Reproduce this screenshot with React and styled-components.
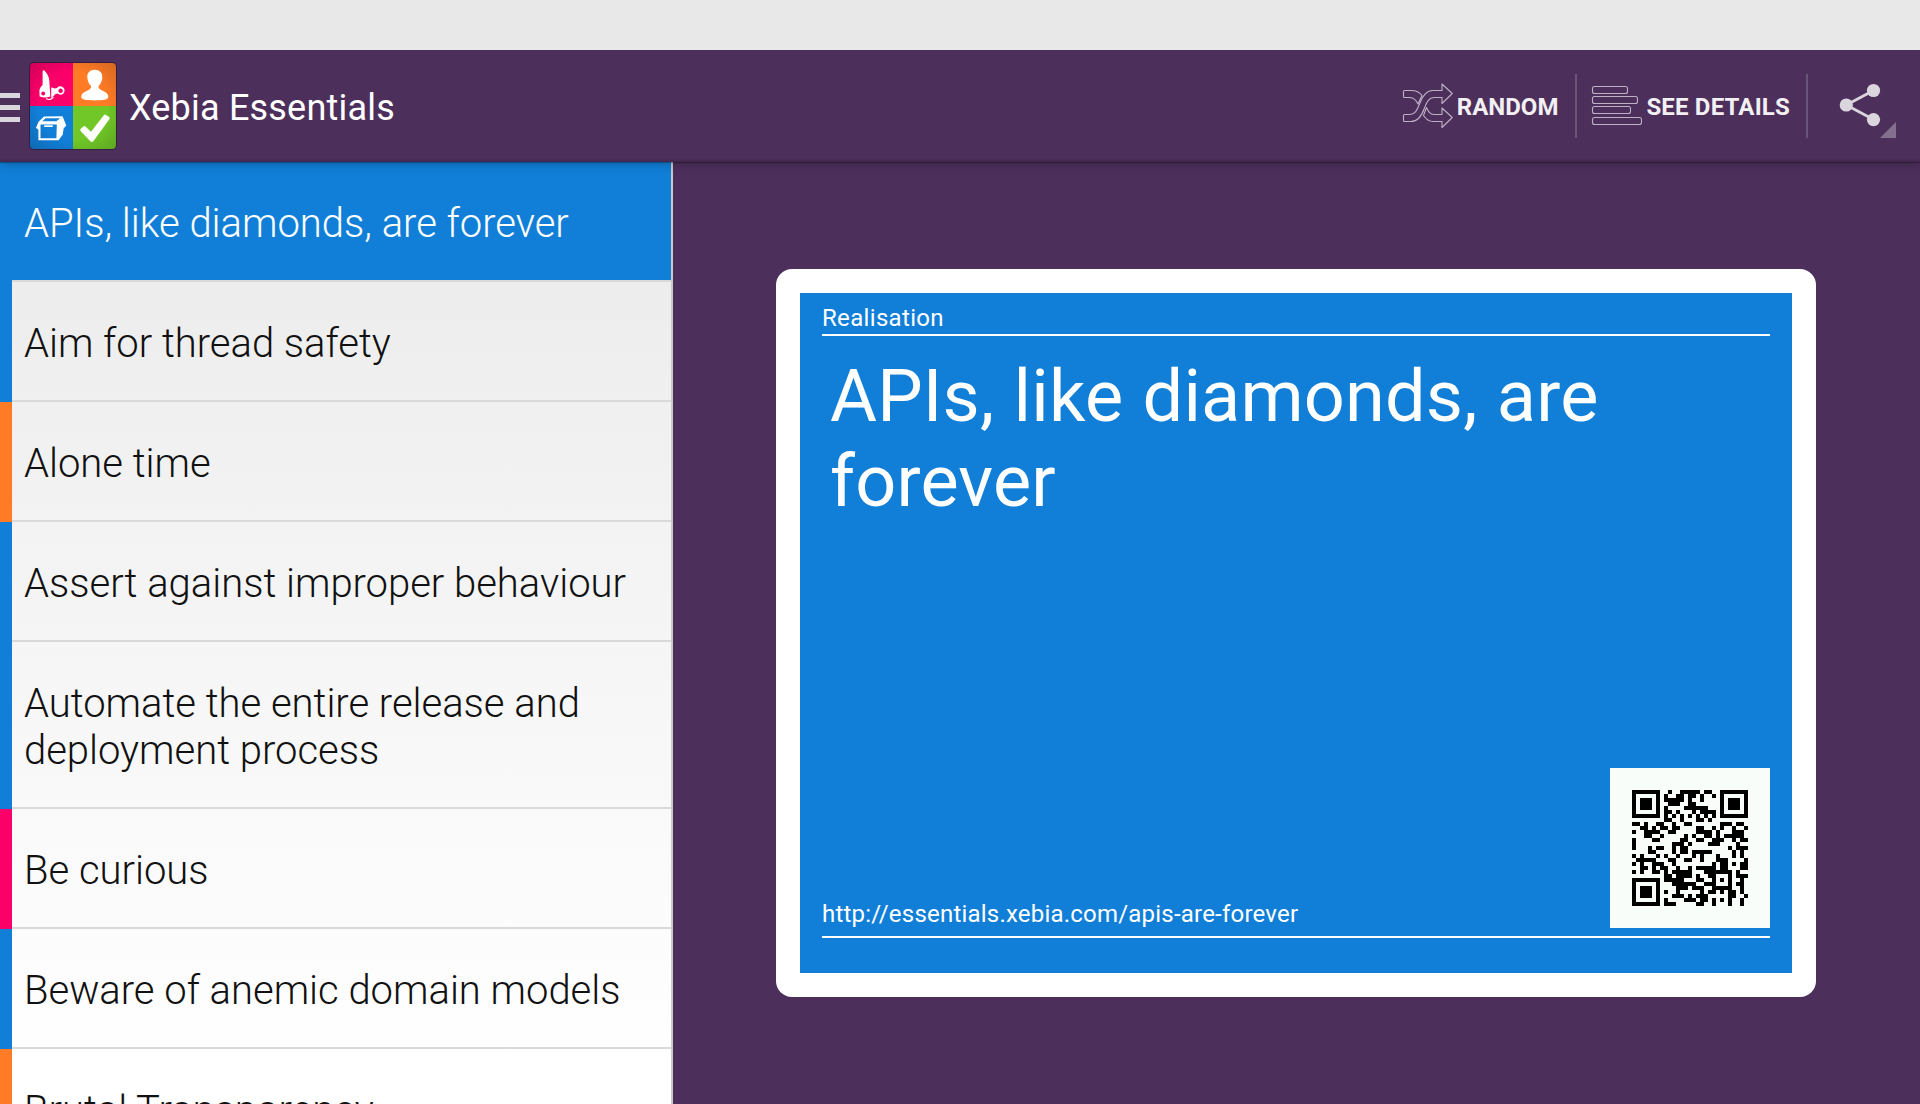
import React from "react";
import styled, { createGlobalStyle } from "styled-components";

const GlobalStyle = createGlobalStyle`
  * { box-sizing: border-box; }
  body { margin: 0; background: #4d2f5c; font-family: Roboto, "Noto Sans", sans-serif; overflow: hidden; }
`;

const COLORS = { realisation: "#117fd8", people: "#ff7b26", craft: "#fb0069" };

/* ---- QR code, version 3, level L, byte mode, mask 7 ---- */
const SIZE = 29;
const FORMAT = "110100101110110";
const isMasked = (r, c) => (((r + c) % 2) + ((r * c) % 3)) % 2 === 0;

function gfMul(a, b) {
  let r = 0;
  for (let i = 7; i >= 0; i--) {
    r = (r << 1) ^ ((r >> 7) * 0x11d);
    r ^= ((b >> i) & 1) * a;
  }
  return r & 255;
}

function codewords(text) {
  let bits = "0100" + text.length.toString(2).padStart(8, "0");
  for (const ch of text) bits += ch.charCodeAt(0).toString(2).padStart(8, "0");
  bits += "0000";
  const data = bits.match(/.{8}/g).map((b) => parseInt(b, 2));
  for (let i = 0; data.length < 55; i++) data.push(i % 2 ? 0x11 : 0xec);
  const gen = new Array(15).fill(0);
  gen[14] = 1;
  let root = 1;
  for (let i = 0; i < 15; i++) {
    for (let j = 0; j < 15; j++) {
      gen[j] = gfMul(gen[j], root);
      if (j + 1 < 15) gen[j] ^= gen[j + 1];
    }
    root = gfMul(root, 2);
  }
  const rem = new Array(15).fill(0);
  data.forEach((b) => {
    const f = b ^ rem.shift();
    rem.push(0);
    gen.forEach((g, i) => { rem[i] ^= gfMul(g, f); });
  });
  return data.concat(rem);
}

function buildQr(text) {
  const m = Array.from({ length: SIZE }, () => new Array(SIZE).fill(null));
  const finder = (r0, c0) => {
    for (let r = -1; r < 8; r++) for (let c = -1; c < 8; c++) {
      const y = r0 + r, x = c0 + c;
      if (y < 0 || x < 0 || y >= SIZE || x >= SIZE) continue;
      const d = Math.max(Math.abs(r - 3), Math.abs(c - 3));
      m[y][x] = d !== 2 && d !== 4;
    }
  };
  finder(0, 0); finder(0, SIZE - 7); finder(SIZE - 7, 0);
  for (let r = -2; r <= 2; r++) for (let c = -2; c <= 2; c++) {
    m[22 + r][22 + c] = Math.max(Math.abs(r), Math.abs(c)) !== 1;
  }
  for (let i = 8; i < SIZE - 8; i++) { m[6][i] = i % 2 === 0; m[i][6] = i % 2 === 0; }
  const bit = (i) => FORMAT[14 - i] === "1";
  for (let i = 0; i <= 5; i++) m[i][8] = bit(i);
  m[7][8] = bit(6); m[8][8] = bit(7); m[8][7] = bit(8);
  for (let i = 9; i < 15; i++) m[8][14 - i] = bit(i);
  for (let i = 0; i < 8; i++) m[8][SIZE - 1 - i] = bit(i);
  for (let i = 8; i < 15; i++) m[SIZE - 15 + i][8] = bit(i);
  m[SIZE - 8][8] = true;
  const stream = codewords(text).map((b) => b.toString(2).padStart(8, "0")).join("");
  let k = 0;
  for (let right = SIZE - 1; right >= 1; right -= 2) {
    if (right === 6) right = 5;
    for (let v = 0; v < SIZE; v++) for (let j = 0; j < 2; j++) {
      const x = right - j;
      const up = ((right + 1) & 2) === 0;
      const y = up ? SIZE - 1 - v : v;
      if (m[y][x] === null) {
        const b = k < stream.length && stream[k] === "1";
        k++;
        m[y][x] = b !== isMasked(y, x);
      }
    }
  }
  return m;
}

function QrCode({ text }) {
  let d = "";
  buildQr(text).forEach((row, y) => row.forEach((on, x) => { if (on) d += `M${x} ${y}h1v1h-1z`; }));
  return (
    <svg width="116" height="116" viewBox={`0 0 ${SIZE} ${SIZE}`} shapeRendering="crispEdges">
      <path d={d} fill="#000" />
    </svg>
  );
}

/* ---- page ---- */
const Page = styled.div`
  display: flex;
  flex-direction: column;
  width: 1920px;
  height: 1104px;
  overflow: hidden;
  background: #4d2f5c;
`;

const StatusStrip = styled.div`
  height: 50px;
  flex: none;
  background: #e8e8e8;
  position: relative;
  z-index: 2;
`;

const ActionBar = styled.header`
  display: flex;
  align-items: flex-start;
  height: 112px;
  flex: none;
  padding: 11px 24px 0 0;
  background: linear-gradient(#4d2f5c 0 108px, #462a54 110px, #422650 112px);
  box-shadow: 0 1px 1px rgba(0, 0, 0, 0.25), 0 2px 10px rgba(0, 0, 0, 0.25);
  position: relative;
  z-index: 1;
`;

const Drawer = styled.div`
  display: flex;
  flex-direction: column;
  gap: 7px;
  width: 20px;
  margin: 32px 8px 0 0;
`;

const DrawerLine = styled.span`
  height: 5px;
  background: #dbd5de;
`;

const Title = styled.h1`
  flex: 1;
  margin: 0 0 0 11px;
  font-size: 36px;
  line-height: 42px;
  font-weight: 400;
  letter-spacing: 0.2px;
  color: #fff;
  padding-top: 26px;
`;

const Action = styled.button`
  display: flex;
  align-items: center;
  height: 64px;
  margin-top: 13px;
  padding: 0 ${(p) => p.$right}px 0 ${(p) => p.$left}px;
  border: 0;
  border-right: 2px solid #6d5579;
  background: none;
  color: #f2f0f3;
  font: 700 24px/28px Roboto, sans-serif;
  letter-spacing: ${(p) => p.$track}px;
  white-space: nowrap;
`;

const ActionLabel = styled.span`
  margin: 2px 0 0 3px;
`;

const ShareAction = styled.div`
  width: 88px;
  height: 64px;
  margin-top: 13px;
`;

const Body = styled.div`
  display: flex;
  flex: 1;
  min-height: 0;
`;

const List = styled.ul`
  width: 673px;
  flex: none;
  margin: 0;
  padding: 0;
  list-style: none;
  border-right: 2px solid #c9c8ca;
  background: linear-gradient(#ededed 120px, #fff 900px);
  overflow: hidden;
`;

const Item = styled.li`
  display: flex;
  border-left: 12px solid ${(p) => p.$accent};
  background: ${(p) => (p.$selected ? p.$accent : "transparent")};
  color: ${(p) => (p.$selected ? "#fff" : "#111")};
`;

const ItemText = styled.div`
  flex: 1;
  min-height: 120px;
  padding: 38px 0 33px 12px;
  border-bottom: 2px solid #d9d9d9;
  font-size: 40px;
  font-weight: 300;
  line-height: 47px;
  letter-spacing: -0.02px;
  white-space: pre-line;
`;

const Detail = styled.main`
  flex: 1;
  display: flex;
  padding: 107px 104px 107px 103px;
`;

const Card = styled.article`
  flex: 1;
  display: flex;
  padding: 24px;
  border-radius: 16px;
  background: #fff;
`;

const CardFace = styled.div`
  flex: 1;
  display: flex;
  flex-direction: column;
  padding: 10px 22px 35px;
  background: #117fd8;
  color: #fff;
`;

const Category = styled.div`
  height: 33px;
  border-bottom: 2px solid #fff;
  font-size: 24px;
  line-height: 31px;
  letter-spacing: 0.33px;
`;

const Heading = styled.h2`
  flex: 1;
  margin: 0;
  padding: 18px 0 0 8px;
  font-size: 72px;
  font-weight: 400;
  line-height: 85px;
  letter-spacing: 0.2px;
  word-spacing: 1.2px;
  white-space: pre-line;
`;

const CardFooter = styled.footer`
  display: flex;
  justify-content: space-between;
  align-items: flex-end;
  padding-bottom: 8px;
  border-bottom: 2px solid #fff;
`;

const Link = styled.span`
  font-size: 24px;
  line-height: 28px;
  letter-spacing: 0.21px;
`;

const QrPlate = styled.div`
  display: flex;
  width: 160px;
  height: 160px;
  padding: 22px;
  background: #f8fdf9;
`;

function Logo() {
  return (
    <svg width="90" height="90" viewBox="-2 -2 90 90">
      <defs>
        <clipPath id="tile"><rect width="86" height="86" rx="4" /></clipPath>
        <radialGradient id="shade" cx="50%" cy="50%" r="72%">
          <stop offset="0.55" stopColor="#000" stopOpacity="0" />
          <stop offset="1" stopColor="#000" stopOpacity="0.18" />
        </radialGradient>
      </defs>
      <rect x="-1" y="-1" width="88" height="88" rx="5" fill="#2c1838" opacity="0.75" />
      <g clipPath="url(#tile)">
        <rect width="43" height="43" fill="#fb0069" />
        <rect x="43" width="43" height="43" fill="#ff7b26" />
        <rect y="43" width="43" height="43" fill="#117fd8" />
        <rect x="43" y="43" width="43" height="43" fill="#70c727" />
        <rect width="86" height="86" fill="url(#shade)" />
      </g>
      <g fill="#fff">
        <path fillRule="evenodd" d="M12.600 8Q13.400 6.600 15 8.200Q18.800 12 19.300 17.500L20.300 33.500Q15 35.600 9.600 33.400L9.400 27Q10 24 12.600 22ZM13.200 28.600a2 2 0 1 0 .01 0Z" />
        <path fillRule="evenodd" d="M21.200 24.300Q24.500 26.200 27 25A4.200 4.200 0 1 1 27.600 30.600Q24.500 30.800 23.600 33L21.200 35ZM30.600 25.600a2.200 2.200 0 1 0 .01 0Z" />
        <path d="M16 35.600Q20.500 38 23.400 34.200" fill="none" stroke="#fff" strokeWidth="1.100" />
        <path d="M64.700 6.800c-5 0-7.600 3.300-7.400 7.400.2 4 1.800 7 3.600 8.600.7 2.400-.8 3.600-3.200 4.600-3.600 1.500-6.400 3-6.400 6.600 0 2.600 5.600 3.400 13.500 3.400s13.500-.8 13.500-3.400c0-3.600-2.800-5.100-6.400-6.600-2.400-1-3.900-2.200-3.200-4.600 1.800-1.600 3.400-4.600 3.600-8.600.2-4.100-2.600-7.400-7.600-7.400Z" />
        <path fillRule="evenodd" d="M14 53.500 32.500 53.200 36.300 62.500 33.600 65.400 32.800 71.500 28.600 77.300H8.400V66.800L6 64.800 8.600 58.700ZM15.500 55.300 12.400 58.200 26.400 58.300 30.200 55.200ZM10.500 61.500V75.200H26.400L26.800 61.500Z" />
        <rect x="14.200" y="62.200" width="8.600" height="1.900" rx=".6" />
        <path d="M50.400 67.800Q49.600 66.800 50.600 65.900L53.600 63.200Q54.600 62.500 55.600 63.400L60.300 68.300Q61 69 61.600 68L74 51.900Q74.900 51 76 51.900L79.200 54.100Q80.200 54.900 79.500 56.100L63.500 78Q62 79.800 60.300 78.200Z" />
      </g>
    </svg>
  );
}

const outline = { fill: "none", stroke: "#e9e2ee", strokeOpacity: 0.72, strokeWidth: 1.1, strokeLinejoin: "round" };

function ShuffleIcon() {
  return (
    <svg width="53" height="52" viewBox="0 0 53 52">
      <g {...outline}>
        <path d="M3.500 34.500H9C14 34.500 16 30.500 18.500 24C21.500 15.500 25 10.500 32 10.500H41V4L51.300 13.500L41 23.500V17.500H33C28 17.500 26 21.500 23.500 28C20.500 36.500 17 41.500 10 41.500H3.500Q2.500 41.500 2.500 40.500V35.500Q2.500 34.500 3.500 34.500Z" />
        <path d="M21 15.500C18.500 12 15 10.500 10 10.500H3.500Q2.500 10.500 2.500 11.500V16.500Q2.500 17.500 3.500 17.500H9C13 17.500 15 20 17 24Z" />
        <path d="M25.500 27.500C27.500 32 29 34.500 33 34.500H41V28L51.300 37.500L41 47.500V41.500H32C27 41.500 24.500 38.500 22.500 35.500Z" />
      </g>
    </svg>
  );
}

function DetailsIcon() {
  return (
    <svg width="53" height="46" viewBox="0 0 53 46">
      <g {...outline}>
        <rect x="2.500" y="3.500" width="35" height="7" rx="2" />
        <rect x="2.500" y="13.500" width="45" height="7" rx="2" />
        <rect x="2.500" y="23.500" width="38" height="7" rx="2" />
        <rect x="2.500" y="34.500" width="49" height="7" rx="2" />
      </g>
    </svg>
  );
}

function ShareIcon() {
  return (
    <svg width="88" height="64" viewBox="0 0 88 64">
      <path d="M65.500 16.500 38.300 31 65.500 45.500" fill="none" stroke="#dbd5de" strokeWidth="2.800" />
      <g fill="#dbd5de">
        <circle cx="38.300" cy="31" r="6.600" />
        <circle cx="65.500" cy="16.500" r="6.600" />
        <circle cx="65.500" cy="45.600" r="6.600" />
      </g>
      <path d="M88 48V64H72Z" fill="#846f8e" />
    </svg>
  );
}

const items = [
  { text: "APIs, like diamonds, are forever", accent: COLORS.realisation, selected: true },
  { text: "Aim for thread safety", accent: COLORS.realisation },
  { text: "Alone time", accent: COLORS.people },
  { text: "Assert against improper behaviour", accent: COLORS.realisation },
  { text: "Automate the entire release and\ndeployment process", accent: COLORS.realisation },
  { text: "Be curious", accent: COLORS.craft },
  { text: "Beware of anemic domain models", accent: COLORS.realisation },
  { text: "Brutal Transparency", accent: COLORS.people },
];

const cardUrl = "http://essentials.xebia.com/apis-are-forever";

export default function App() {
  return (
    <>
      <GlobalStyle />
      <Page>
        <StatusStrip />
        <ActionBar>
          <Drawer><DrawerLine /><DrawerLine /><DrawerLine /></Drawer>
          <Logo />
          <Title>Xebia Essentials</Title>
          <Action $left={0} $right={17} $track={0}><ShuffleIcon /><ActionLabel>RANDOM</ActionLabel></Action>
          <Action $left={13} $right={16} $track={0.18}><DetailsIcon /><ActionLabel>SEE DETAILS</ActionLabel></Action>
          <ShareAction><ShareIcon /></ShareAction>
        </ActionBar>
        <Body>
          <List>
            {items.map((item) => (
              <Item key={item.text} $accent={item.accent} $selected={item.selected}>
                <ItemText>{item.text}</ItemText>
              </Item>
            ))}
          </List>
          <Detail>
            <Card>
              <CardFace>
                <Category>Realisation</Category>
                <Heading>{"APIs, like diamonds, are\nforever"}</Heading>
                <CardFooter>
                  <Link>{cardUrl}</Link>
                  <QrPlate><QrCode text={cardUrl} /></QrPlate>
                </CardFooter>
              </CardFace>
            </Card>
          </Detail>
        </Body>
      </Page>
    </>
  );
}
